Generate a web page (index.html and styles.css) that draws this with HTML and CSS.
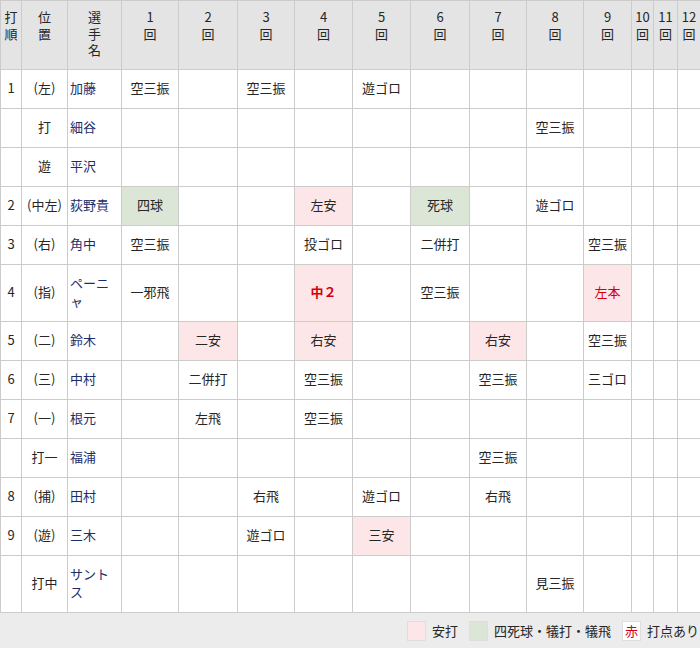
FILE: index.html
```html
<!DOCTYPE html>
<html lang="ja">
<head>
<meta charset="utf-8">
<title>打席結果</title>
<link rel="stylesheet" href="styles.css">
</head>
<body>
<div class="wrap">
<table class="score">
<colgroup>
<col class="c-order"><col class="c-pos"><col class="c-name">
<col class="c57"><col class="c59"><col class="c57"><col class="c58"><col class="c58"><col class="c59"><col class="c57"><col class="c57"><col class="c48"><col class="c22"><col class="c24"><col class="c23">
</colgroup>
<thead>
<tr>
<th>打<br>順</th><th>位<br>置</th><th>選<br>手<br>名</th>
<th>1<br>回</th><th>2<br>回</th><th>3<br>回</th><th>4<br>回</th><th>5<br>回</th><th>6<br>回</th><th>7<br>回</th><th>8<br>回</th><th>9<br>回</th><th>10<br>回</th><th>11<br>回</th><th>12<br>回</th>
</tr>
</thead>
<tbody>
<tr><td>1</td><td>(左)</td><td class="name">加藤</td><td>空三振</td><td></td><td>空三振</td><td></td><td>遊ゴロ</td><td></td><td></td><td></td><td></td><td></td><td></td><td></td></tr>
<tr><td></td><td>打</td><td class="name">細谷</td><td></td><td></td><td></td><td></td><td></td><td></td><td></td><td>空三振</td><td></td><td></td><td></td><td></td></tr>
<tr><td></td><td>遊</td><td class="name">平沢</td><td></td><td></td><td></td><td></td><td></td><td></td><td></td><td></td><td></td><td></td><td></td><td></td></tr>
<tr><td>2</td><td>(中左)</td><td class="name">荻野貴</td><td class="walk">四球</td><td></td><td></td><td class="hit">左安</td><td></td><td class="walk">死球</td><td></td><td>遊ゴロ</td><td></td><td></td><td></td><td></td></tr>
<tr><td>3</td><td>(右)</td><td class="name">角中</td><td>空三振</td><td></td><td></td><td>投ゴロ</td><td></td><td>二併打</td><td></td><td></td><td>空三振</td><td></td><td></td><td></td></tr>
<tr><td>4</td><td>(指)</td><td class="name">ペーニャ</td><td>一邪飛</td><td></td><td></td><td class="hit rbi strong">中２</td><td></td><td>空三振</td><td></td><td></td><td class="hit rbi">左本</td><td></td><td></td><td></td></tr>
<tr><td>5</td><td>(二)</td><td class="name">鈴木</td><td></td><td class="hit">二安</td><td></td><td class="hit">右安</td><td></td><td></td><td class="hit">右安</td><td></td><td>空三振</td><td></td><td></td><td></td></tr>
<tr><td>6</td><td>(三)</td><td class="name">中村</td><td></td><td>二併打</td><td></td><td>空三振</td><td></td><td></td><td>空三振</td><td></td><td>三ゴロ</td><td></td><td></td><td></td></tr>
<tr><td>7</td><td>(一)</td><td class="name">根元</td><td></td><td>左飛</td><td></td><td>空三振</td><td></td><td></td><td></td><td></td><td></td><td></td><td></td><td></td></tr>
<tr><td></td><td>打一</td><td class="name">福浦</td><td></td><td></td><td></td><td></td><td></td><td></td><td>空三振</td><td></td><td></td><td></td><td></td><td></td></tr>
<tr><td>8</td><td>(捕)</td><td class="name">田村</td><td></td><td></td><td>右飛</td><td></td><td>遊ゴロ</td><td></td><td>右飛</td><td></td><td></td><td></td><td></td><td></td></tr>
<tr><td>9</td><td>(遊)</td><td class="name">三木</td><td></td><td></td><td>遊ゴロ</td><td></td><td class="hit">三安</td><td></td><td></td><td></td><td></td><td></td><td></td><td></td></tr>
<tr><td></td><td>打中</td><td class="name">サントス</td><td></td><td></td><td></td><td></td><td></td><td></td><td></td><td>見三振</td><td></td><td></td><td></td><td></td></tr>
</tbody>
</table>
<div class="legend">
<span class="item"><span class="box box-hit"></span>安打</span>
<span class="item"><span class="box box-walk"></span>四死球・犠打・犠飛</span>
<span class="item"><span class="box box-rbi">赤</span>打点あり</span>
</div>
</div>
</body>
</html>
```

FILE: styles.css
```css
html, body {
  margin: 0;
  padding: 0;
  background: #fff;
}
body {
  font-family: "Noto Sans CJK JP", "Noto Sans", sans-serif;
  font-size: 13px;
  color: #262626;
}
.wrap {
  width: 700px;
}
.score {
  width: 700px;
  table-layout: fixed;
  border-collapse: collapse;
}
.c-order { width: 21px; }
.c-pos { width: 46px; }
.c-name { width: 54px; }
.c57 { width: 57px; }
.c58 { width: 58px; }
.c59 { width: 59px; }
.c48 { width: 48px; }
.c22 { width: 22px; }
.c23 { width: 23px; }
.c24 { width: 24px; }
.score th,
.score td {
  border: 1px solid #cccccc;
  text-align: center;
  font-weight: normal;
  padding: 0;
}
.score th {
  background: #e4e4e4;
  vertical-align: top;
  line-height: 16.5px;
  padding-top: 8px;
  height: 60px;
  box-sizing: content-box;
}
.score td {
  line-height: 18px;
  padding: 9px 0 11px;
  vertical-align: middle;
  height: 18px;
}
.score td.name {
  text-align: left;
  padding-left: 2px;
  padding-right: 2px;
  color: #1b2e6c;
}
.score td.hit {
  background: #fde6e7;
}
.score td.walk {
  background: #dbe6d7;
}
.score td.rbi {
  color: #d4000f;
}
.score td.strong {
  font-weight: bold;
}
.legend {
  background: #ececec;
  height: 36px;
  display: flex;
  justify-content: flex-end;
  align-items: center;
  gap: 11px;
  padding-right: 1px;
}
.item {
  display: flex;
  align-items: center;
  gap: 6px;
  line-height: 18px;
}
.box {
  width: 17px;
  height: 18px;
  border: 1px solid #dedede;
  display: inline-flex;
  align-items: center;
  justify-content: center;
  font-size: 13px;
}
.box-hit { background: #fde6e7; }
.box-walk { background: #dbe6d7; }
.box-rbi { background: #fff; color: #d4000f; }
```
